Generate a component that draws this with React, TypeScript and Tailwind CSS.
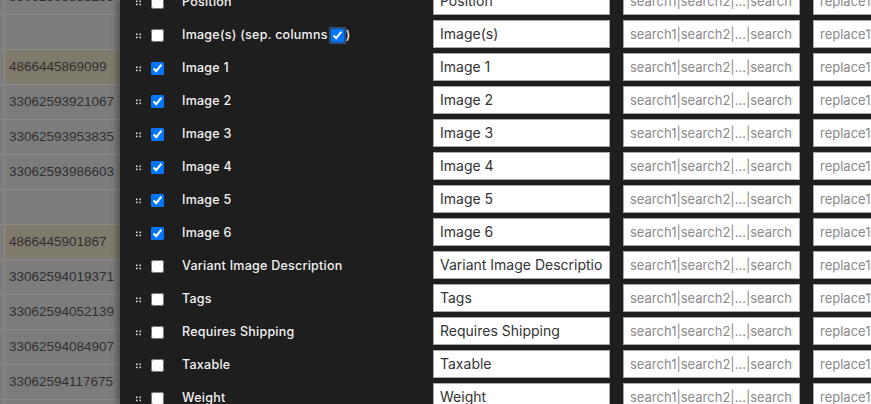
import React from 'react';

const tableRows = [
    { id: '33062593888299', tint: false },
    { id: '', tint: false },
    { id: '4866445869099', tint: true },
    { id: '33062593921067', tint: false },
    { id: '33062593953835', tint: false },
    { id: '33062593986603', tint: false },
    { id: '', tint: false },
    { id: '4866445901867', tint: true },
    { id: '33062594019371', tint: false },
    { id: '33062594052139', tint: false },
    { id: '33062594084907', tint: false },
    { id: '33062594117675', tint: false },
    { id: '', tint: false },
];

const fields = [
    { label: 'Position', checked: false },
    { label: 'Image(s)', checked: false, sep: true },
    { label: 'Image 1', checked: true },
    { label: 'Image 2', checked: true },
    { label: 'Image 3', checked: true },
    { label: 'Image 4', checked: true },
    { label: 'Image 5', checked: true },
    { label: 'Image 6', checked: true },
    { label: 'Variant Image Description', checked: false },
    { label: 'Tags', checked: false },
    { label: 'Requires Shipping', checked: false },
    { label: 'Taxable', checked: false },
    { label: 'Weight', checked: false },
];

function DragHandle() {
    return (
        <svg width="6" height="6" viewBox="0 0 6 6" className="shrink-0">
            <rect x="0" y="0.5" width="1.6" height="1.6" fill="#d4d4d4" />
            <rect x="3.4" y="0.5" width="1.6" height="1.6" fill="#d4d4d4" />
            <rect x="0" y="3.6" width="1.6" height="1.6" fill="#d4d4d4" />
            <rect x="3.4" y="3.6" width="1.6" height="1.6" fill="#d4d4d4" />
        </svg>
    );
}

export default function App() {
    return (
        <div className="w-[871px] h-[404px] overflow-hidden flex bg-[#7c7c7c]">
            {/* background table (dimmed) */}
            <div className="w-[120px] shrink-0 flex flex-col mt-[-20px] font-['Liberation_Sans',Arial,sans-serif] text-[13.5px] text-[#303030]">
                {tableRows.map((r, i) => (
                    <div
                        key={i}
                        className={`h-[35px] shrink-0 flex items-center border-b border-[#8a8a8a] ${r.tint ? 'bg-[#7f7b6c]' : 'bg-[#7c7c7c]'}`}
                    >
                        <div className="w-[5px] h-full border-r border-[#8a8a8a] bg-[#7c7c7c]" />
                        <span className="pl-[4px]">{r.id}</span>
                    </div>
                ))}
            </div>

            {/* mapping panel */}
            <div className="flex-1 bg-[#1e1e1e] shadow-[-3px_0_6px_rgba(0,0,0,0.35)] overflow-hidden font-['Inter','Open_Sans',sans-serif]">
                <div className="flex flex-col mt-[-16px]">
                    {fields.map(f => (
                        <div key={f.label} className="h-[33px] shrink-0 flex items-center">
                            <div className="w-[313px] shrink-0 flex items-center pt-1 pl-[16px]">
                                <DragHandle />
                                <input
                                    type="checkbox"
                                    defaultChecked={f.checked}
                                    className="ml-[9px] w-[13px] h-[13px] m-0"
                                />
                                <span className="ml-[18px] text-[12.5px] tracking-[0.25px] font-medium text-[#f2f2f2] whitespace-nowrap flex items-center">
                                    {f.label}
                                    {f.sep && (
                                        <>
                                            <span>&nbsp;(sep. columns</span>
                                            <input
                                                type="checkbox"
                                                defaultChecked
                                                className="ml-[3px] mr-[2px] w-[13px] h-[13px] rounded-sm shadow-[0_0_0_2px_rgba(59,130,246,0.45)]"
                                            />
                                            <span>)</span>
                                        </>
                                    )}
                                </span>
                            </div>
                            <div className="flex gap-[13px] text-[14px]">
                                <input
                                    type="text"
                                    defaultValue={f.label}
                                    className="w-[177px] h-[28px] shrink-0 bg-white border border-[#a9a9a9] px-[6px] text-[#333] outline-none"
                                />
                                <input
                                    type="text"
                                    placeholder="search1|search2|...|searchN"
                                    className="w-[177px] h-[28px] shrink-0 bg-white border border-[#a9a9a9] px-[6px] text-[13px] text-[#333] placeholder:text-[#8a8a8a] outline-none"
                                />
                                <input
                                    type="text"
                                    placeholder="replace1|replace2|...|replaceN"
                                    className="w-[177px] h-[28px] shrink-0 bg-white border border-[#a9a9a9] px-[6px] text-[13px] text-[#333] placeholder:text-[#8a8a8a] outline-none"
                                />
                            </div>
                        </div>
                    ))}
                </div>
            </div>
        </div>
    );
}
